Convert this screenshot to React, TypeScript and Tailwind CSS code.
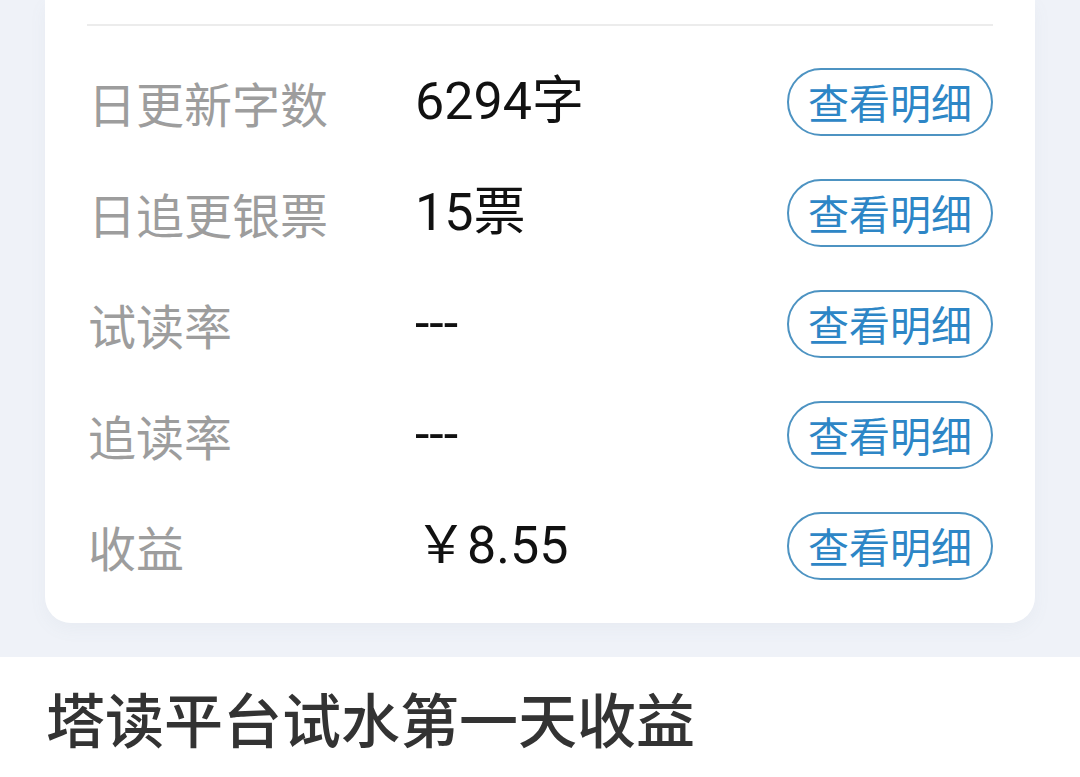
import React from "react";

const rows = [
  { label: "日更新字数", value: "6294字" },
  { label: "日追更银票", value: "15票" },
  { label: "试读率", value: "---" },
  { label: "追读率", value: "---" },
  { label: "收益", value: "￥8.55" },
];

export default function App() {
  return (
    <div
      className="w-[1080px] h-[777px] overflow-hidden bg-white"
      style={{ fontFamily: '"Noto Sans CJK SC", "Noto Sans", sans-serif' }}
    >
      <div className="bg-[#eff2f8] px-[45px] pb-[35px] h-[657px]">
        <div className="bg-white rounded-b-[26px] px-[42px] pt-[24px] pb-[22px] shadow-[0_6px_18px_rgba(120,130,160,0.06)]">
          <div className="h-[2px] bg-[#ececec]" />
          <div className="mt-[20px]">
            {rows.map((r) => (
              <div key={r.label} className="flex items-center h-[111px]">
                <div className="w-[328px] text-[48px] leading-none text-[#9d9d9d] pl-[1px]">
                  {r.label}
                </div>
                <div
                  className="flex-1 text-[52px] leading-none text-[#111]"
                  style={{ fontFamily: 'Roboto, "Noto Sans CJK SC", sans-serif' }}
                >
                  {r.value}
                </div>
                <button className="w-[206px] h-[68px] rounded-full border-2 border-[#4d93c2] text-[#2d86c6] text-[41px] leading-none flex items-center justify-center">
                  查看明细
                </button>
              </div>
            ))}
          </div>
        </div>
      </div>
      <div className="h-[120px] flex items-center px-[46px]">
        <div className="text-[59px] leading-none font-medium text-[#333]">
          塔读平台试水第一天收益
        </div>
      </div>
    </div>
  );
}
